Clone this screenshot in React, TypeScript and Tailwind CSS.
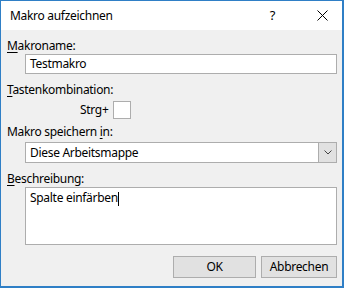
import React from 'react';

const font = { fontFamily: '"Noto Sans", "Open Sans", sans-serif' };

const Label = ({ pre, u, post }: { pre?: string; u: string; post: string }) => (
  <div className="h-[16px] leading-[16px] text-[12px] text-black">
    {pre}
    <span className="underline underline-offset-[2px]">{u}</span>
    {post}
  </div>
);

const App: React.FC = () => {
  return (
    <div
      className="w-[344px] h-[288px] bg-[#f0f0f0] border border-[#2f7fc6] border-r-2 border-b-2 flex flex-col overflow-hidden tracking-[-0.3px]"
      style={font}
    >
      <div className="h-[29px] bg-white flex items-center shrink-0">
        <span className="pl-[9px] text-[12px] text-black flex-1">Makro aufzeichnen</span>
        <span className="text-[13px] text-black mr-[42px]">?</span>
        <svg width="11" height="11" viewBox="0 0 11 11" className="mr-[14px]">
          <path d="M0.5 0.5L10.5 10.5M10.5 0.5L0.5 10.5" stroke="#000" strokeWidth="1" />
        </svg>
      </div>

      <div className="flex flex-col pl-[6px] pt-[8px]">
        <Label u="M" post="akroname:" />
        <div className="ml-[18px] w-[312px] h-[20px] bg-white border border-[#adadad] flex items-center pl-[4px] text-[12px]">
          Testmakro
        </div>

        <div className="mt-[8px]">
          <Label u="T" post="astenkombination:" />
        </div>
        <div className="mt-[3px] flex items-center h-[18px]">
          <span className="ml-[73px] text-[12px]">Strg+</span>
          <div className="ml-[4px] w-[18px] h-[18px] bg-white border border-[#adadad]" />
        </div>

        <div className="mt-[5px]">
          <Label pre="Makro speichern " u="i" post="n:" />
        </div>
        <div className="mt-[2px] ml-[18px] w-[312px] h-[21px] bg-white border border-[#adadad] flex items-center text-[12px]">
          <span className="flex-1 pl-[4px]">Diese Arbeitsmappe</span>
          <div className="w-[18px] h-[19px] bg-[#e1e1e1] border-l border-[#adadad] flex items-center justify-center">
            <svg width="8" height="5" viewBox="0 0 8 5">
              <path d="M0.5 0.5L4 4L7.5 0.5" stroke="#444" strokeWidth="1" fill="none" />
            </svg>
          </div>
        </div>

        <div className="mt-[8px]">
          <Label u="B" post="eschreibung:" />
        </div>
        <div className="ml-[18px] w-[312px] h-[58px] bg-white border border-[#adadad] pl-[4px] pt-[2px] text-[12px] leading-[16px]">
          Spalte einfärben
          <span className="inline-block w-[1px] h-[14px] bg-black align-middle" />
        </div>

        <div className="mt-[11px] flex justify-end pr-[5px] gap-[5px]">
          <button className="w-[83px] h-[22px] bg-[#e1e1e1] border border-[#adadad] text-[12px]">OK</button>
          <button className="w-[76px] h-[22px] bg-[#e1e1e1] border border-[#adadad] text-[12px]">Abbrechen</button>
        </div>
      </div>
    </div>
  );
};

export default App;
